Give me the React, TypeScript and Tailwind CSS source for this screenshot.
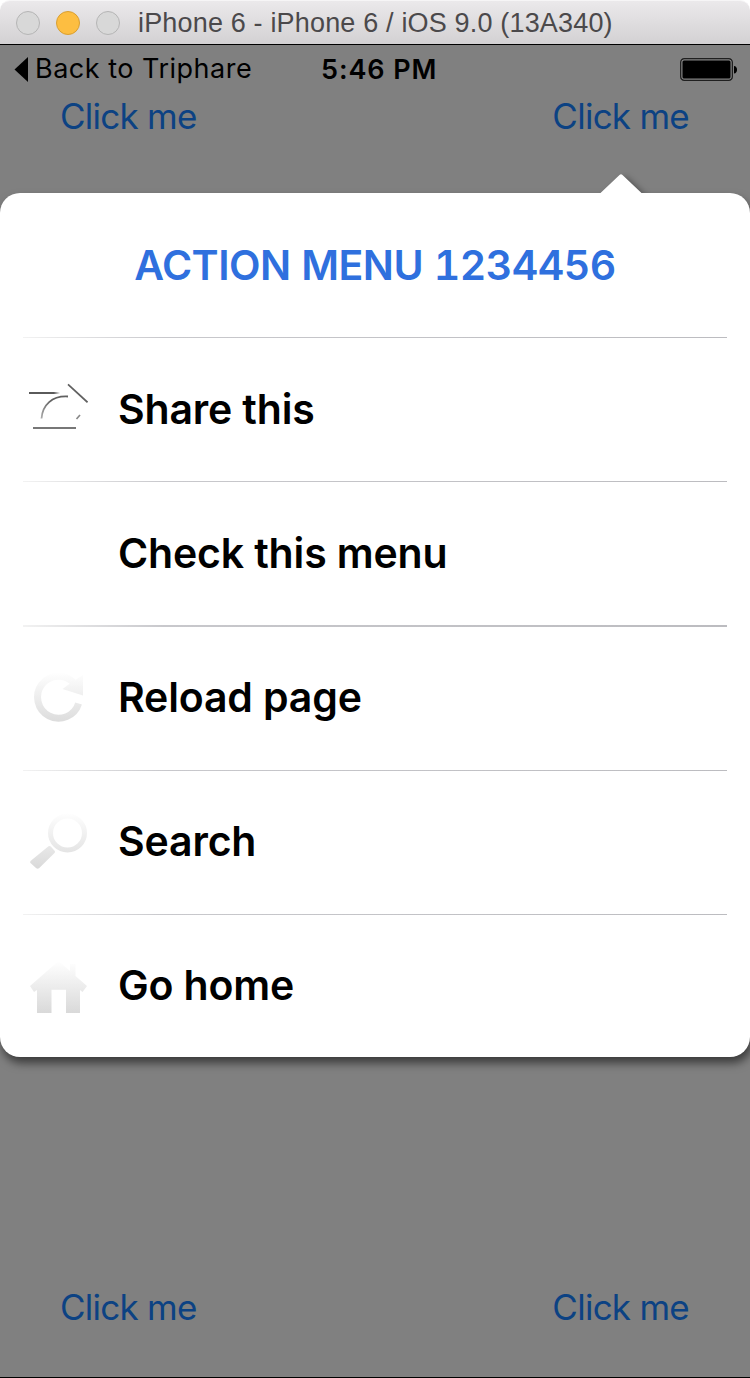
import type { ReactNode } from "react";

function ShareIcon() {
  return (
    <svg width="60" height="60" viewBox="0 0 60 60" fill="none">
      <defs>
        <linearGradient id="edge" x1="0" y1="0" x2="1" y2="0">
          <stop offset="0.8" stopColor="#5a5a5a" />
          <stop offset="1" stopColor="#5a5a5a" stopOpacity="0" />
        </linearGradient>
        <linearGradient id="arc" x1="0" y1="1" x2="1" y2="0">
          <stop offset="0" stopColor="#aaaaaa" />
          <stop offset="0.6" stopColor="#606060" />
        </linearGradient>
      </defs>
      <rect x="1" y="13" width="31" height="2" fill="url(#edge)" />
      <path d="M40 5.3 L59.5 23.3" stroke="#606060" strokeWidth="1.7" />
      <path d="M13.5 39.5 C14.5 26 24 16.6 40 17.5" stroke="url(#arc)" strokeWidth="1.8" />
      <path d="M48.5 40 L52 36" stroke="#888888" strokeWidth="1.7" />
      <path d="M5 49 H48" stroke="#777777" strokeWidth="2.2" />
    </svg>
  );
}

function ReloadIcon() {
  return (
    <svg width="60" height="60" viewBox="0 0 60 60" fill="none">
      <defs>
        <linearGradient id="reload" gradientUnits="userSpaceOnUse" x1="0" y1="5" x2="0" y2="55">
          <stop offset="0" stopColor="#ffffff" />
          <stop offset="1" stopColor="#dcdcdc" />
        </linearGradient>
      </defs>
      <path d="M46 16 A21 21 0 1 0 50.6 36.5" stroke="url(#reload)" strokeWidth="7" />
      <path d="M55 8 V28.5 L34.5 22 L44 15 Z" fill="url(#reload)" />
    </svg>
  );
}

function SearchIcon() {
  return (
    <svg width="60" height="60" viewBox="0 0 60 60" fill="none">
      <defs>
        <linearGradient id="search" gradientUnits="userSpaceOnUse" x1="0" y1="1" x2="0" y2="58">
          <stop offset="0" stopColor="#ffffff" />
          <stop offset="1" stopColor="#d9d9d9" />
        </linearGradient>
      </defs>
      <circle cx="39.5" cy="22" r="17" stroke="url(#search)" strokeWidth="5" />
      <path d="M20.5 35.3 Q22 34.5 23 35.7 L26.8 40 Q27.5 41.2 26.5 42.1 L11 57.2 Q9.5 58.2 8 57 L2.5 52 Q1.5 51 2.8 49.8 Z" fill="url(#search)" />
    </svg>
  );
}

function HomeIcon() {
  return (
    <svg width="60" height="60" viewBox="0 0 60 60">
      <defs>
        <linearGradient id="home" gradientUnits="userSpaceOnUse" x1="0" y1="6" x2="0" y2="58">
          <stop offset="0" stopColor="#ffffff" />
          <stop offset="1" stopColor="#d9d9d9" />
        </linearGradient>
      </defs>
      <path d="M30.5 6 L42 16 V9 H47.5 V21 L59 31 L54.5 37 L52 35 V58 H38 V34.7 H23.5 V58 H9 V35 L6 37 L2 31 Z" fill="url(#home)" />
    </svg>
  );
}

interface MenuItem {
  label: string;
  rule: string;
  icon?: ReactNode;
}

const items: MenuItem[] = [
  { label: "Share this", rule: "top-0 h-px", icon: <ShareIcon /> },
  { label: "Check this menu", rule: "top-0 h-px" },
  { label: "Reload page", rule: "top-0 h-[2px]", icon: <ReloadIcon /> },
  { label: "Search", rule: "top-px h-px", icon: <SearchIcon /> },
  { label: "Go home", rule: "top-px h-px", icon: <HomeIcon /> },
];

function LinkRow() {
  return (
    <div className="flex justify-between pr-[61px] pl-[60px] text-[35px] leading-[44px] tracking-[-0.75px] text-[#0c4283]">
      <button className="whitespace-nowrap">Click me</button>
      <button className="whitespace-nowrap">Click me</button>
    </div>
  );
}

function TitleBar() {
  return (
    <header className="flex h-11 shrink-0 items-center rounded-t-[10px] border-t border-[#f6f5f6] bg-linear-to-b from-[#ebe9eb] to-[#d3d1d3] pl-4">
      <div className="flex gap-4">
        <span className="size-6 rounded-full border border-[#b5b5b5] bg-[#d8d8d8]" />
        <span className="size-6 rounded-full border border-[#d99f32] bg-[#fdbe41]" />
        <span className="size-6 rounded-full border border-[#b5b5b5] bg-[#d8d8d8]" />
      </div>
      <h1 className="ml-[18px] font-['Liberation_Sans',sans-serif] text-[27px] leading-8 tracking-[0.17px] whitespace-nowrap text-[#4b494b]">
        iPhone 6 - iPhone 6 / iOS 9.0 (13A340)
      </h1>
    </header>
  );
}

function StatusBar() {
  return (
    <div className="grid h-[48px] grid-cols-[321px_1fr_auto] items-center pr-3 text-black">
      <div className="flex items-center pl-[14px]">
        <svg width="14" height="25" viewBox="0 0 14 25">
          <path d="M14 0 V25 L0.5 12.5 Z" fill="#000" />
        </svg>
        <span className="ml-[7px] text-[27px] leading-8 tracking-[0.5px] whitespace-nowrap">Back to Triphare</span>
      </div>
      <span className="pt-px text-[27px] leading-8 font-semibold tracking-[0.9px] whitespace-nowrap">5:46 PM</span>
      <svg width="58" height="23" viewBox="0 0 58 23">
        <rect x="0.75" y="0.75" width="51.5" height="21.5" rx="3.5" fill="none" stroke="#202020" strokeWidth="1.5" />
        <rect x="2" y="2" width="49" height="19" rx="2" fill="none" stroke="#8a8a8a" strokeWidth="0.8" />
        <rect x="2.5" y="2.5" width="48" height="18" rx="1.5" fill="#000" />
        <path d="M54 8 C58 8 58 15.5 54 15.5 Z" fill="#000" />
      </svg>
    </div>
  );
}

export default function App() {
  return (
    <div className="flex h-[1378px] w-[750px] flex-col overflow-hidden bg-white font-['Inter',sans-serif]">
      <TitleBar />
      <main className="flex flex-1 flex-col overflow-hidden border-y border-black bg-[#808080]">
        <StatusBar />
        <div className="mt-px">
          <LinkRow />
        </div>
        <section className="relative mt-[55px] h-[864px] rounded-[20px] bg-white shadow-[2px_6px_10px_rgba(0,0,0,0.55)]">
          <div className="absolute -top-[29px] left-[590px] h-[29px] w-16 overflow-hidden pt-[10px] pl-[10px]">
            <svg className="overflow-visible drop-shadow-[4px_2px_3px_rgba(0,0,0,0.35)]" width="42" height="20" viewBox="0 0 42 20">
              <path d="M0 20 L0.5 19 L19.5 1 Q21 -0.5 22.5 1 L41.5 19 L42 20 Z" fill="#fff" />
            </svg>
          </div>
          <h2 className="flex h-36 items-center justify-center pt-[2px] text-[41px] font-semibold tracking-[-0.5px] whitespace-nowrap text-[#2f70de] tabular-nums">
            ACTION MENU 1234456
          </h2>
          <ul>
            {items.map((item) => (
              <li key={item.label} className="relative flex h-36 items-center pl-7">
                <span className={`absolute right-[23px] left-[23px] bg-linear-to-r from-[#f2f2f2] via-[#c8c8cc] via-20% to-[#bcbcc0] ${item.rule}`} />
                <span className="size-[60px] shrink-0">{item.icon}</span>
                <span className="ml-[30px] text-[41px] leading-[50px] font-semibold tracking-[-0.15px] whitespace-nowrap text-black">
                  {item.label}
                </span>
              </li>
            ))}
          </ul>
        </section>
        <div className="mt-[228px]">
          <LinkRow />
        </div>
      </main>
    </div>
  );
}
